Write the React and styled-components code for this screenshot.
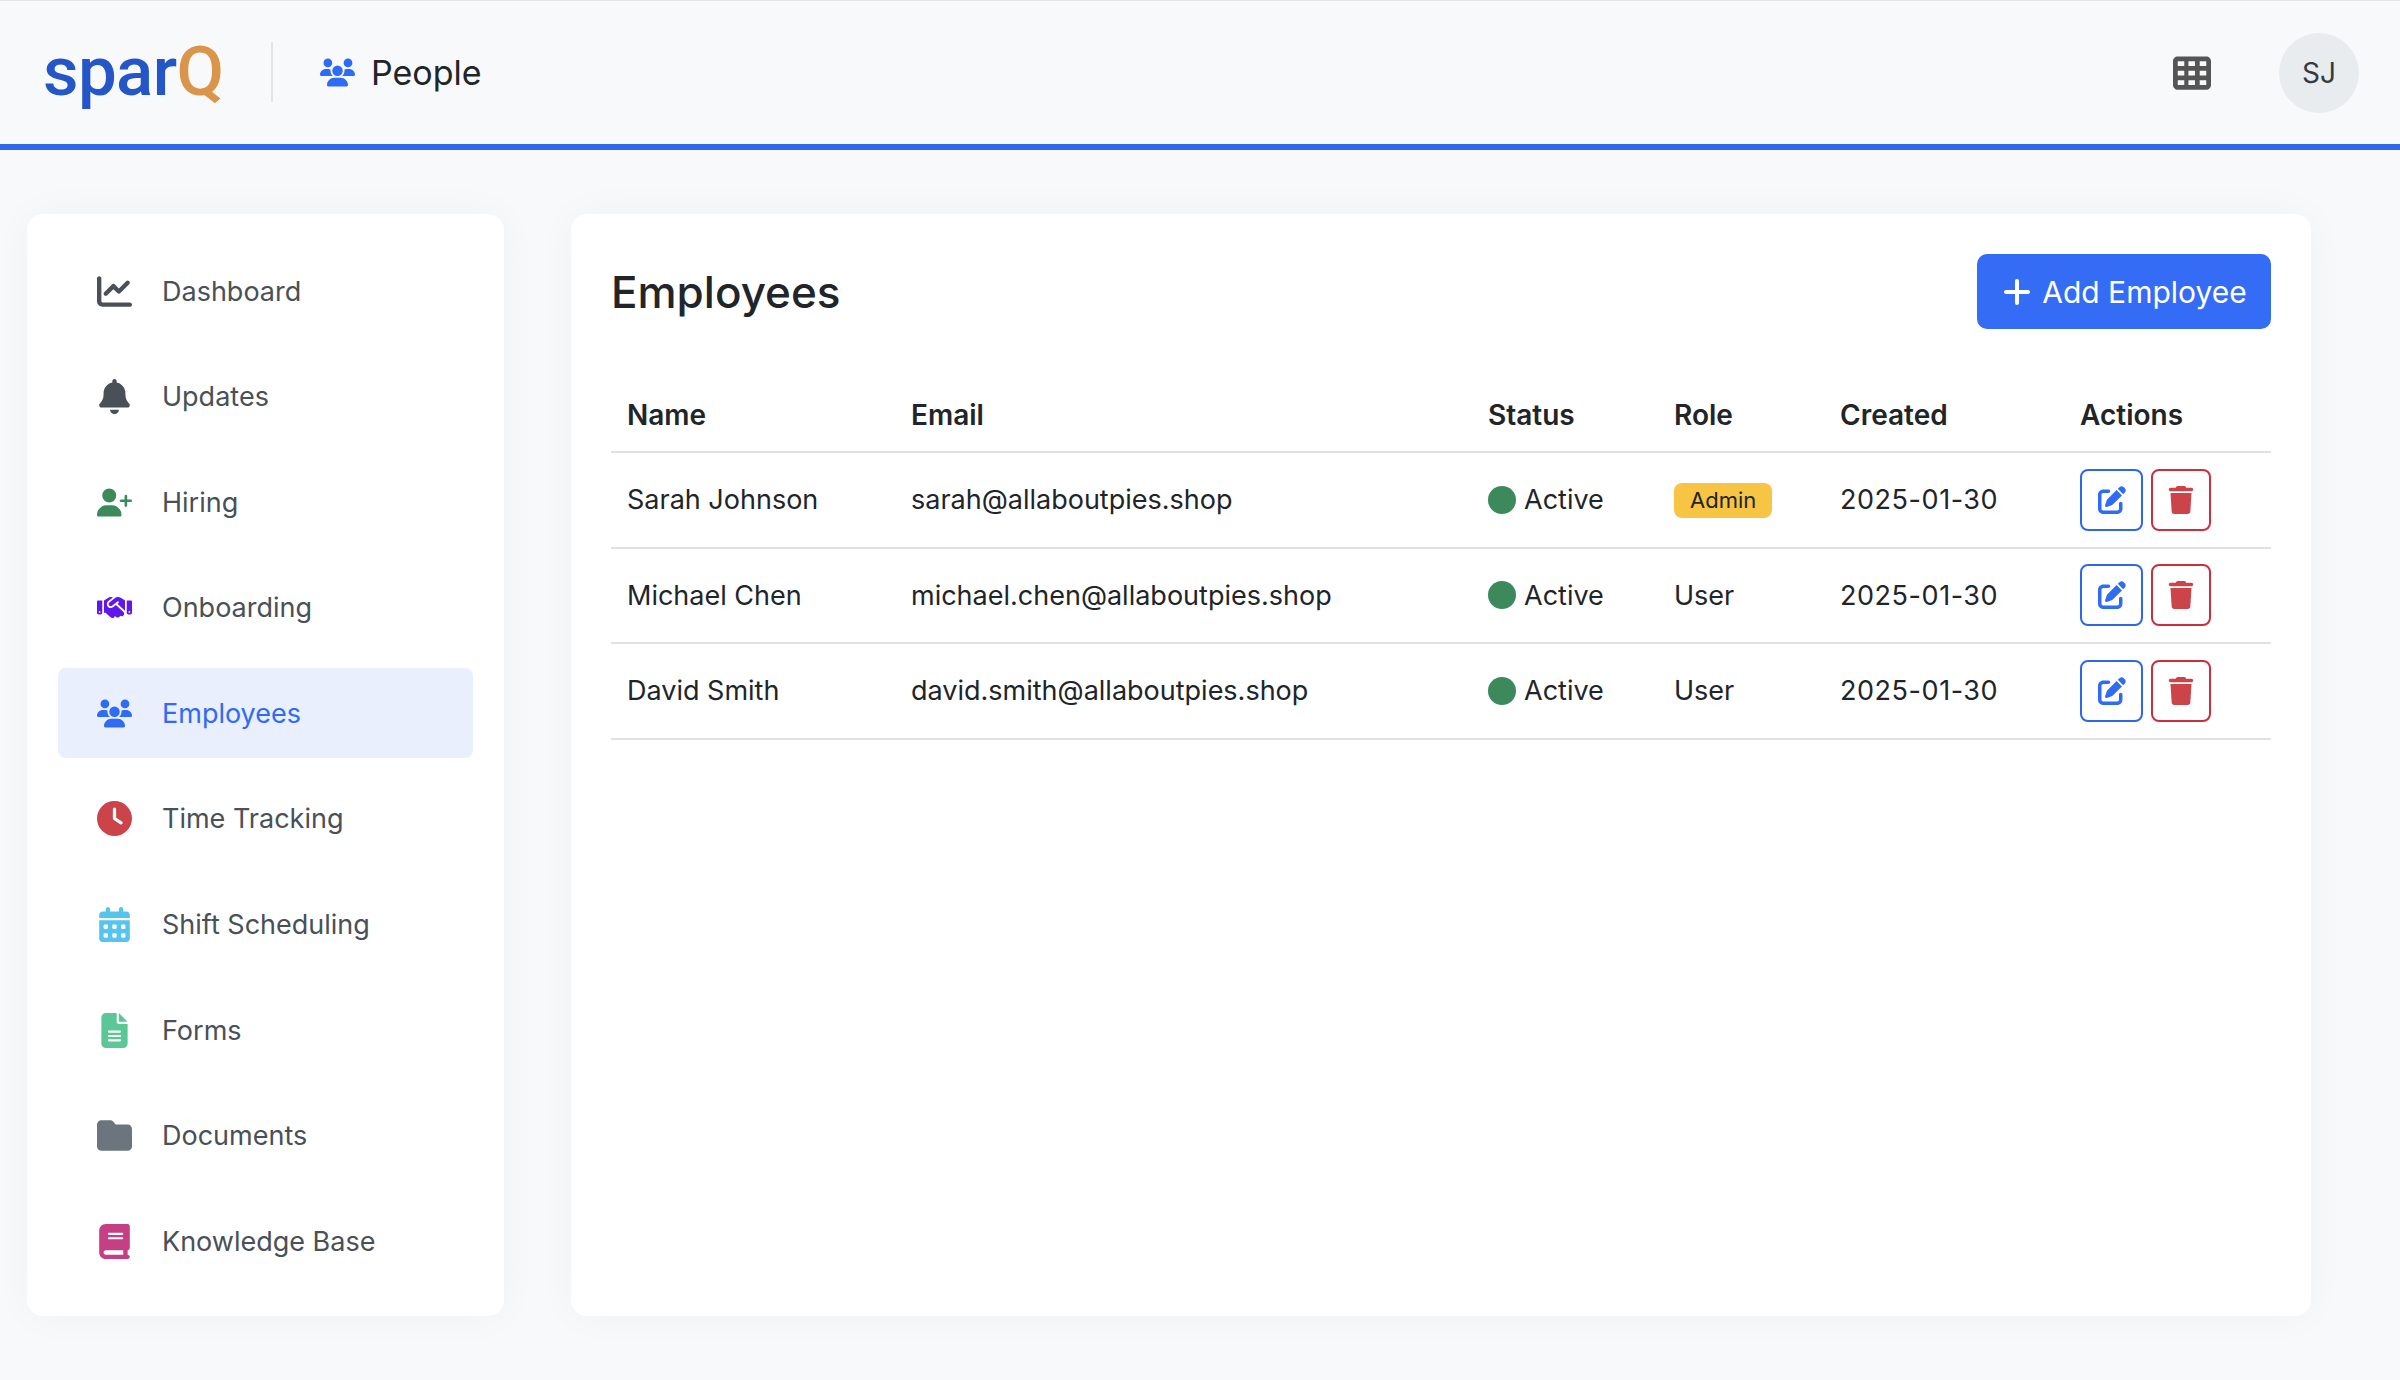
import styled, { createGlobalStyle } from "styled-components";
import {
  FaBell,
  FaBook,
  FaCalendarDays,
  FaChartLine,
  FaCircle,
  FaClock,
  FaFileLines,
  FaFolder,
  FaHandshake,
  FaPenToSquare,
  FaPlus,
  FaTableCells,
  FaTrash,
  FaUserPlus,
  FaUsers,
} from "react-icons/fa6";

const GlobalStyle = createGlobalStyle`
  * {
    box-sizing: border-box;
  }

  body {
    margin: 0;
    background: #f8f9fb;
    color: #212529;
    font-family: Inter, "Liberation Sans", sans-serif;
  }
`;

const Page = styled.div`
  width: 2400px;
  height: 1380px;
  overflow: hidden;
`;

const Header = styled.header`
  height: 150px;
  padding: 0 41px 0 43px;

  display: flex;
  align-items: center;

  border-top: 1px solid #e3e5e3;
  border-bottom: 6px solid #2f66ee;
`;

const Logo = styled.div`
  width: 228px;
  margin-top: -2px;

  font-family: Roboto, "Liberation Sans", sans-serif;
  font-size: 69px;
  font-weight: 500;
  letter-spacing: -0.6px;
  line-height: 80px;

  color: #2456c8;
`;

const LogoAccent = styled.span`
  color: #da954a;
`;

const Divider = styled.div`
  width: 2px;
  height: 60px;
  margin-top: -2px;
  background: #e4e5e7;
`;

const Section = styled.div`
  margin-left: 47px;

  display: flex;
  align-items: center;
  gap: 16px;

  font-size: 34px;
  font-weight: 400;
  color: #212529;

  svg {
    width: auto;
    height: 35px;
    color: #2f6bf5;
  }
`;

const HeaderRight = styled.div`
  margin-left: auto;

  display: flex;
  align-items: center;
  gap: 68px;
`;

const GridIcon = styled(FaTableCells)`
  color: #555555;
`;

const Avatar = styled.div`
  width: 80px;
  height: 80px;
  border-radius: 50%;

  display: flex;
  align-items: center;
  justify-content: center;

  background: #e9ecef;
  color: #343a40;
  font-size: 28px;
`;

const Content = styled.div`
  padding: 64px 89px 64px 27px;

  display: flex;
  gap: 67px;
  align-items: stretch;
`;

const Sidebar = styled.nav`
  width: 477px;
  height: 1102px;
  padding: 32px 31px 0;

  display: flex;
  flex-direction: column;

  background: white;
  border-radius: 16px;
  box-shadow: 0 0 40px rgba(0, 0, 0, 0.035);
`;

const NavItem = styled.a`
  height: 90px;
  flex-shrink: 0;
  margin-bottom: 15.6px;
  padding-left: 33px;

  display: flex;
  align-items: center;
  gap: 25px;

  border-radius: 8px;
  background: ${(props) => (props.$active ? "#e9effd" : "transparent")};
  color: ${(props) => (props.$active ? "#2f6bf5" : "#495057")};

  font-size: 27px;
  font-weight: 400;
  cursor: pointer;
`;

const NavIcon = styled.span`
  width: 46px;
  flex-shrink: 0;

  display: flex;
  align-items: center;
  justify-content: center;

  color: ${(props) => props.$color};

  svg {
    width: auto;
    height: 35px;
  }
`;

const Main = styled.main`
  width: 1740px;
  height: 1102px;
  padding: 40px;

  background: white;
  border-radius: 16px;
  box-shadow: 0 0 40px rgba(0, 0, 0, 0.035);
`;

const TitleRow = styled.div`
  display: flex;
  align-items: center;
  justify-content: space-between;

  margin-bottom: 50px;
`;

const Title = styled.h1`
  margin: 0;

  font-size: 44px;
  font-weight: 500;
  color: #212529;
`;

const AddButton = styled.button`
  width: 294px;
  height: 75px;

  display: flex;
  align-items: center;
  justify-content: center;
  gap: 9px;

  border: none;
  border-radius: 10px;
  background: #346cf5;
  color: white;

  font-family: inherit;
  font-size: 30px;
  cursor: pointer;

  svg {
    width: auto;
    height: 32px;
  }
`;

const Table = styled.table`
  width: 1660px;
  table-layout: fixed;
  border-collapse: collapse;
`;

const Th = styled.th`
  height: 73px;
  padding: 0 16px;

  border-bottom: 2px solid #dee2e6;

  text-align: left;
  font-size: 28px;
  font-weight: 600;
  color: #212529;
`;

const Td = styled.td`
  height: 95.5px;
  padding: 0 16px;

  border-bottom: 2px solid #dee2e6;

  font-size: 27px;
  color: #212529;
`;

const DateCell = styled(Td)`
  letter-spacing: 0.55px;
`;

const Status = styled.span`
  display: flex;
  align-items: center;
  gap: 8px;

  svg {
    color: #3c8a5c;
  }
`;

const Badge = styled.span`
  display: inline-flex;
  align-items: center;
  height: 35px;
  padding: 0 16px;

  border-radius: 8px;
  background: #f8c444;

  font-size: 22px;
  color: #212529;
`;

const Actions = styled.div`
  display: flex;
  gap: 8px;
`;

const IconButton = styled.button`
  width: ${(props) => props.$width}px;
  height: 62px;
  padding: 0;

  display: flex;
  align-items: center;
  justify-content: center;

  background: white;
  border: 2px solid ${(props) => props.$color};
  border-radius: 8px;
  color: ${(props) => props.$fill};
  cursor: pointer;

  svg {
    width: auto;
    height: 28px;
  }
`;

const navItems = [
  { label: "Dashboard", icon: FaChartLine, color: "#495057" },
  { label: "Updates", icon: FaBell, color: "#495057" },
  { label: "Hiring", icon: FaUserPlus, color: "#3c8a5c" },
  { label: "Onboarding", icon: FaHandshake, color: "#5f17ea" },
  { label: "Employees", icon: FaUsers, color: "#2f6bf5", active: true },
  { label: "Time Tracking", icon: FaClock, color: "#cb444a" },
  { label: "Shift Scheduling", icon: FaCalendarDays, color: "#56c5ee" },
  { label: "Forms", icon: FaFileLines, color: "#5cc796" },
  { label: "Documents", icon: FaFolder, color: "#6c757d" },
  { label: "Knowledge Base", icon: FaBook, color: "#c63e83" },
];

const employees = [
  { name: "Sarah Johnson", email: "sarah@allaboutpies.shop", role: "Admin" },
  { name: "Michael Chen", email: "michael.chen@allaboutpies.shop", role: "User" },
  { name: "David Smith", email: "david.smith@allaboutpies.shop", role: "User" },
];

const columnWidths = [284, 577, 186, 166, 240, 207];
const columns = ["Name", "Email", "Status", "Role", "Created", "Actions"];

function App() {
  return (
    <Page>
      <GlobalStyle />

      <Header>
        <Logo>
          spar<LogoAccent>Q</LogoAccent>
        </Logo>
        <Divider />
        <Section>
          <FaUsers />
          People
        </Section>
        <HeaderRight>
          <GridIcon size={38} />
          <Avatar>SJ</Avatar>
        </HeaderRight>
      </Header>

      <Content>
        <Sidebar>
          {navItems.map((item) => (
            <NavItem key={item.label} $active={item.active}>
              <NavIcon $color={item.color}>
                <item.icon />
              </NavIcon>
              {item.label}
            </NavItem>
          ))}
        </Sidebar>

        <Main>
          <TitleRow>
            <Title>Employees</Title>
            <AddButton>
              <FaPlus />
              Add Employee
            </AddButton>
          </TitleRow>

          <Table>
            <colgroup>
              {columnWidths.map((width, i) => (
                <col key={i} width={width} />
              ))}
            </colgroup>
            <thead>
              <tr>
                {columns.map((column) => (
                  <Th key={column}>{column}</Th>
                ))}
              </tr>
            </thead>
            <tbody>
              {employees.map((employee) => (
                <tr key={employee.email}>
                  <Td>{employee.name}</Td>
                  <Td>{employee.email}</Td>
                  <Td>
                    <Status>
                      <FaCircle size={28} />
                      Active
                    </Status>
                  </Td>
                  <Td>
                    {employee.role === "Admin" ? <Badge>Admin</Badge> : employee.role}
                  </Td>
                  <DateCell>2025-01-30</DateCell>
                  <Td>
                    <Actions>
                      <IconButton $width={63} $color="#2f66ee" $fill="#2f6bf5">
                        <FaPenToSquare />
                      </IconButton>
                      <IconButton $width={60} $color="#c9303c" $fill="#cb444a">
                        <FaTrash />
                      </IconButton>
                    </Actions>
                  </Td>
                </tr>
              ))}
            </tbody>
          </Table>
        </Main>
      </Content>
    </Page>
  );
}

export default App;
